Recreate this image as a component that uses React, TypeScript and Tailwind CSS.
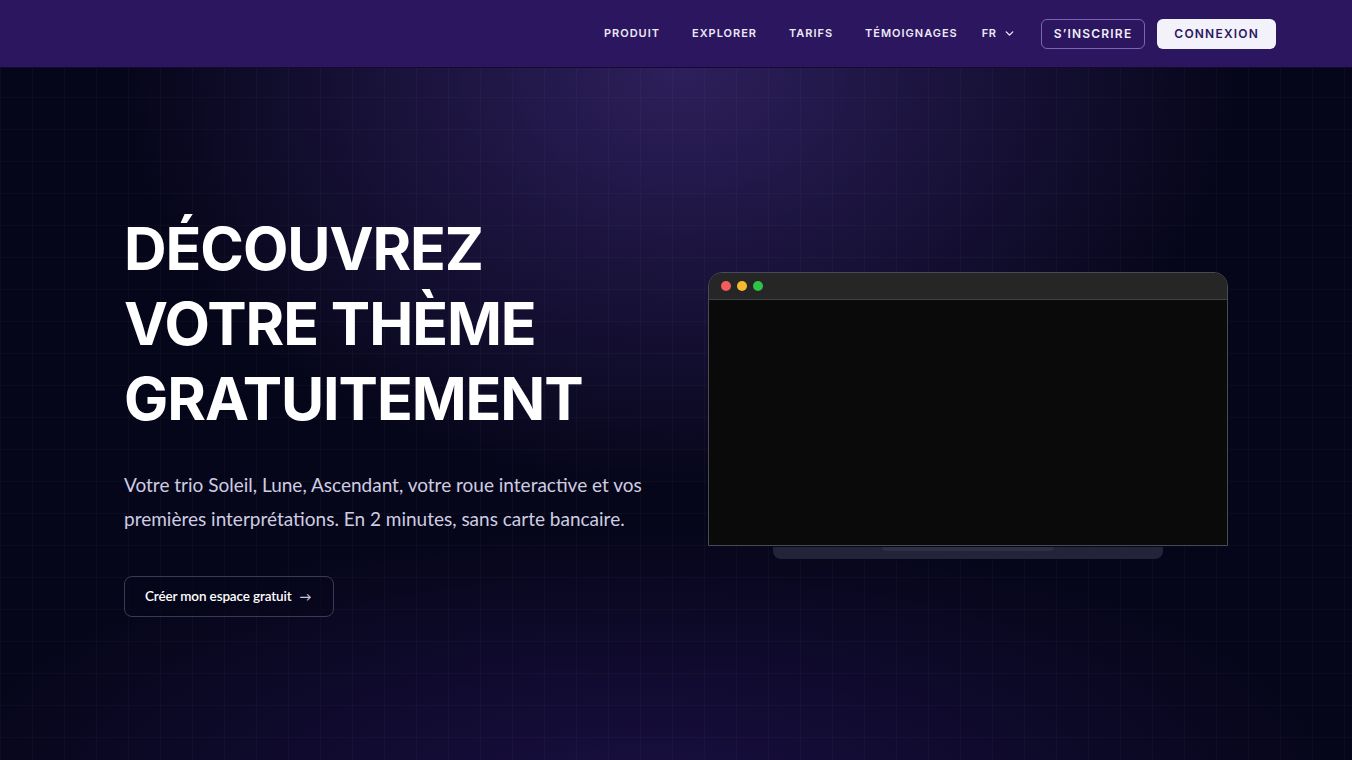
import { ChevronDown } from 'lucide-react'

const navLinks = ['Produit', 'Explorer', 'Tarifs', 'Témoignages']

const Header = () => {
  return (
    <header className="h-[68px] bg-[#2c1660] border-b border-[#14092e] flex items-center justify-end pr-[76px] font-['Inter',sans-serif]">
      <nav className="flex items-center">
        {navLinks.map((link) => (
          <a
            key={link}
            href="#"
            className="text-[11px] font-semibold uppercase tracking-[0.09em] text-[#ece8f7] mr-8"
          >
            {link}
          </a>
        ))}
        <button className="flex items-center gap-1.5 text-[11px] font-semibold tracking-[0.06em] text-[#ece8f7] -ml-2 mr-[25px]">
          FR
          <ChevronDown size={13} strokeWidth={2.5} />
        </button>
        <a
          href="#"
          className="h-[30px] px-3 flex items-center rounded-md border border-[#7c64b8] text-[12px] font-semibold tracking-[0.1em] text-[#f1eefa]"
        >
          S’INSCRIRE
        </a>
        <a
          href="#"
          className="ml-3 h-[30px] px-[17px] flex items-center rounded-md bg-[#f3f1fa] text-[12px] font-semibold tracking-[0.1em] text-[#2c1660]"
        >
          CONNEXION
        </a>
      </nav>
    </header>
  )
}

const LaptopPreview = () => {
  return (
    <div className="w-full mt-[2px]">
      <div className="rounded-t-[14px] border border-[#4a4a55] overflow-hidden">
        <div className="h-[27px] bg-[#262626] border-b border-[#3f3f46] flex items-center gap-1.5 pl-3">
          <span className="w-2.5 h-2.5 rounded-full bg-[#f25c5c]" />
          <span className="w-2.5 h-2.5 rounded-full bg-[#f5b92f]" />
          <span className="w-2.5 h-2.5 rounded-full bg-[#2ec448]" />
        </div>
        <div className="h-[245px] bg-[#0a0a0b]" />
      </div>
      <div className="mx-auto mt-[1px] w-[75%] h-[12px] rounded-b-[8px] bg-[#23233a] flex justify-center">
        <div className="w-[44%] h-[4px] rounded-b-md bg-[#2e2e44]" />
      </div>
    </div>
  )
}

export default function App() {
  return (
    <div className="min-h-[760px] bg-[#06061a] flex flex-col">
      <Header />
      <section className="relative flex-1 overflow-hidden">
        {/* glow + grid backdrop */}
        <div className="pointer-events-none absolute inset-0 bg-[radial-gradient(ellipse_560px_420px_at_680px_0px,rgba(62,42,120,0.7),transparent),radial-gradient(ellipse_700px_260px_at_640px_720px,rgba(40,22,96,0.55),transparent)]" />
        <div className="pointer-events-none absolute inset-0 bg-[linear-gradient(rgba(255,255,255,0.025)_1px,transparent_1px),linear-gradient(90deg,rgba(255,255,255,0.025)_1px,transparent_1px)] bg-[size:32px_32px] bg-[position:0px_-3px]" />

        <div className="relative mx-auto w-[1104px] min-h-[692px] grid grid-cols-2 gap-16 items-center">
          <div>
            <h1 className="font-['Inter',sans-serif] font-bold text-[59px] leading-[75px] tracking-[-0.018em] text-white">
              DÉCOUVREZ
              <br />
              VOTRE THÈME
              <br />
              GRATUITEMENT
            </h1>
            <p className="mt-8 font-['Lato',sans-serif] text-[19px] leading-[34px] text-[#cfcde2]">
              Votre trio Soleil, Lune, Ascendant, votre roue interactive et vos premières interprétations. En 2 minutes, sans carte bancaire.
            </p>
            <button className="mt-10 h-[41px] pl-5 pr-[22px] rounded-lg border border-[#3b3a55] bg-[#07071a]/60 font-['Lato',sans-serif] text-[13.5px] font-semibold tracking-[-0.01em] text-white flex items-center gap-2">
              Créer mon espace gratuit
              <span className="text-[#c9c7dc] text-[12px]">→</span>
            </button>
          </div>
          <LaptopPreview />
        </div>
      </section>
    </div>
  )
}
